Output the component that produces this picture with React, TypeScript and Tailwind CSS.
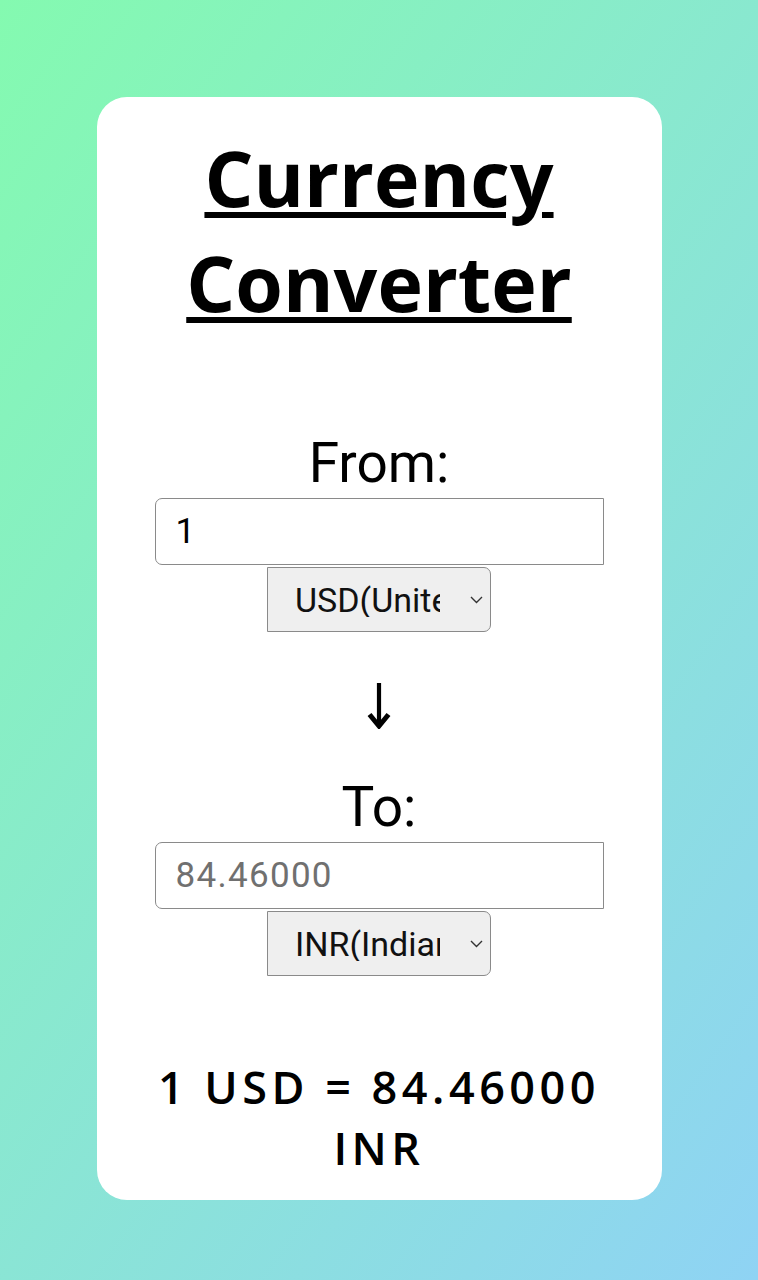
/**
 * Currency Converter
 * Simple from/to converter card
 */

// ============================================================================
// Pieces
// ============================================================================

function FakeSelect({ label }: { label: string }) {
    return (
        <div className="mt-[2px] flex h-[65px] w-[224px] items-center rounded-r-[7px] border border-[#8a8a8a] bg-[#efefef] pl-[27px] pr-[7px]">
            <span className="w-[145px] overflow-hidden whitespace-nowrap text-[34px] leading-none text-[#111]">
                {label}
            </span>
            <svg className="ml-auto" width="13" height="8" viewBox="0 0 13 8" fill="none">
                <path d="M1 1l5.5 5.5L12 1" stroke="#333" strokeWidth="1.4" />
            </svg>
        </div>
    );
}

function Field({ value, muted }: { value: string; muted?: boolean }) {
    return (
        <div
            className={
                'mt-[3px] flex h-[67px] w-[449px] items-center rounded-l-[7px] border border-[#8a8a8a] bg-white pl-[20px] text-[35px] leading-none ' +
                (muted ? 'tracking-[1.3px] text-[#707070]' : 'text-black')
            }
        >
            {value}
        </div>
    );
}

// ============================================================================
// App
// ============================================================================

export default function App() {
    return (
        <div className="h-[1280px] w-full overflow-hidden bg-[linear-gradient(125deg,#84fab0_0%,#8fd3f4_100%)] pt-[97px] font-['Roboto',sans-serif]">
            <div className="mx-auto flex w-[565px] flex-col items-center rounded-[30px] bg-white pb-[22px] pt-[28px] text-black">
                <h1 className="w-[480px] text-center font-['Open_Sans',sans-serif] text-[77px] font-bold leading-[105px] underline decoration-[6px] underline-offset-[5px]">
                    Currency Converter
                </h1>

                <div className="mt-[96px] text-[55px] leading-[64px]">From:</div>
                <Field value="1" />
                <FakeSelect label="USD(United States Dollar)" />

                {/* down arrow between the two sides */}
                <svg className="mt-[51px]" width="26" height="46" viewBox="0 0 26 46" fill="none">
                    <path d="M13 0v42" stroke="#000" strokeWidth="4.2" />
                    <path d="M3.5 31.5l9.5 11.5 9.5-11.5" stroke="#000" strokeWidth="5" />
                </svg>

                <div className="mt-[46px] text-[55px] leading-[64px]">To:</div>
                <Field value="84.46000" muted />
                <FakeSelect label="INR(Indian Rupee)" />

                <p className="mt-[80px] w-[460px] text-center font-['Open_Sans',sans-serif] text-[45px] font-semibold leading-[61px] tracking-[4.5px]">
                    1 USD = 84.46000 INR
                </p>
            </div>
        </div>
    );
}
